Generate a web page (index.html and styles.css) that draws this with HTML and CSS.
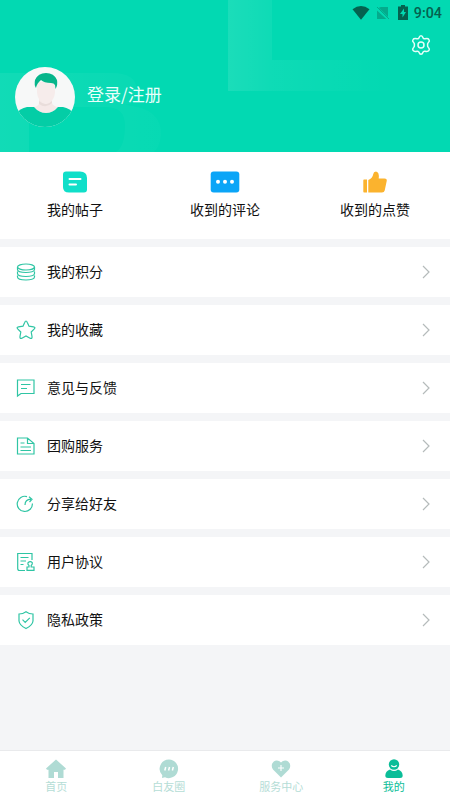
FILE: index.html
```html
<!DOCTYPE html>
<html lang="zh-CN">
<head>
<meta charset="utf-8">
<title>我的</title>
<link rel="stylesheet" href="styles.css">
</head>
<body>
<div class="app">
  <header class="header">
    <svg class="header-art" viewBox="0 0 450 152" aria-hidden="true">
      <defs>
        <linearGradient id="fadeB" x1="0" y1="0" x2="1" y2="0"><stop offset="0" stop-color="#fff" stop-opacity=".06"/><stop offset="1" stop-color="#fff" stop-opacity=".02"/></linearGradient>
        <linearGradient id="fadeL" x1="0" y1="0" x2="1" y2="0"><stop offset="0" stop-color="#fff" stop-opacity=".1"/><stop offset=".2" stop-color="#fff" stop-opacity=".05"/><stop offset=".75" stop-color="#fff" stop-opacity="0"/></linearGradient>
      </defs>
      <path fill="url(#fadeB)" d="M0 73H112Q137 73 137 91Q137 103 125 105Q162 108 161 135Q160 146 154 152H116Q125 147 125 125Q125 107 106 107H29V152H0Z"/>
      <path fill="url(#fadeL)" d="M228 0H272V60H450V91H228Z"/>
    </svg>
    <div class="status">
      <svg class="wifi" viewBox="0 0 18 14"><path d="M.5 3.2Q9-3.2 17.5 3.2L9 13.7Z"/></svg>
      <svg class="sim" viewBox="0 0 12 14"><path d="M4 1H11V11L1.700 1.700ZM0 4.500 9.300 13H0Z"/><path class="slash" d="M0 1 12 13"/></svg>
      <svg class="battery" viewBox="0 0 10 15"><path fill-rule="evenodd" d="M3 0H7V1.500H10V15H0V1.500H3ZM6 3.500 2 9H4.500V12.500L8 7H6Z"/></svg>
      <span class="time">9:04</span>
    </div>
    <svg class="settings" viewBox="0 0 20 20"><path d="M10 .8Q11.400.8 12 2.800Q12.400 4.100 14 3.800Q17 3 18 4.600Q19 6 17.400 7.500Q16.300 8.600 16.600 10Q16.300 11.400 17.400 12.500Q19 14 18 15.400Q17 17 14 16.200Q12.400 15.900 12 17.200Q11.400 19.200 10 19.200Q8.600 19.200 8 17.200Q7.600 15.900 6 16.200Q3 17 2 15.400Q1 14 2.600 12.500Q3.700 11.400 3.400 10Q3.700 8.600 2.600 7.500Q1 6 2 4.600Q3 3 6 3.800Q7.600 4.100 8 2.800Q8.600.8 10 .8Z"/><circle cx="10" cy="10" r="3"/></svg>
    <div class="profile">
      <svg class="avatar" viewBox="0 0 60 60">
        <defs><clipPath id="face"><circle cx="30" cy="30" r="30"/></clipPath></defs>
        <g clip-path="url(#face)">
          <rect width="60" height="60" fill="#f7f8f8"/>
          <path fill="#04cda6" d="M0 48Q5 41 12 40H48Q55 41 60 48V60H0Z"/>
          <path fill="#f5e9e8" d="M24 31H37V36Q38 39 43 40Q38 46 31 46Q24 46 19 40Q24 39 24 36Z"/>
          <path fill="#e9dddb" d="M24 34Q31 40 37 34V36Q31 42 24 37Z"/>
          <path fill="#f6eceb" d="M22 15H40V26Q39 35 31 37Q23 35 22 26Z"/>
          <path fill="#06b58b" d="M21 21Q19 18 20 13Q23 6 31 6Q39 6 42 13Q43 18 40.500 22L40 18Q39 16 36 16Q29 16 26 13Q22 16 21 21Z"/>
        </g>
      </svg>
      <span class="login">登录/注册</span>
    </div>
  </header>

  <section class="stats">
    <a class="stat">
      <svg viewBox="0 0 30 22"><path fill="#10dfc9" d="M6 .5H20Q27 .5 27 7V18.500Q27 21.500 24 21.500H9Q3 21.500 3 16V3.500Q3 .5 6 .5Z"/><path stroke="#fff" stroke-width="2" stroke-linecap="round" d="M9.500 8H20.500M9.500 13.500H16"/></svg>
      <span>我的帖子</span>
    </a>
    <a class="stat">
      <svg viewBox="0 0 30 22"><rect x=".7" y=".5" width="28.600" height="21" rx="3" fill="#0ba5f7"/><g fill="#fff"><circle cx="8" cy="10.700" r="2"/><circle cx="15" cy="10.700" r="2"/><circle cx="22" cy="10.700" r="2"/></g></svg>
      <span>收到的评论</span>
    </a>
    <a class="stat">
      <svg viewBox="0 0 30 22"><path fill="#fbb32e" d="M4 8.500H7V21.500H4Q3.300 21.500 3.300 20.500V9.500Q3.300 8.500 4 8.500ZM8.300 9Q12.500 7.500 13.300 3Q13.500.5 16 .5Q19.500 1 18.700 7.500H24.500Q27.300 7.500 26.700 10L24.700 19.500Q24.200 21.500 22 21.500H8.300Z"/></svg>
      <span>收到的点赞</span>
    </a>
  </section>

  <nav class="menu">
    <a class="row"><svg class="icon" viewBox="0 0 20 20"><ellipse cx="10" cy="5" rx="8.500" ry="3"/><path d="M1.500 5V7.500C1.500 11.500 18.500 11.500 18.500 7.500V5M1.500 9.500V11.500C1.500 15.500 18.500 15.500 18.500 11.500V9.500M1.500 13.500V15C1.500 19 18.500 19 18.500 15V13.500"/></svg><span class="label">我的积分</span><svg class="chevron" viewBox="0 0 8 14"><path d="M1 1 7 7 1 13"/></svg></a>
    <a class="row"><svg class="icon" viewBox="0 0 20 20"><path d="M10 1Q10.700 1 11.200 2.200L13 6.200 17.500 6.800Q19.800 7.200 18.300 8.900L15.200 12 16 16.400Q16.400 19.200 14.100 18.200L10 16 5.900 18.200Q3.600 19.200 4 16.400L4.800 12 1.700 8.900Q.2 7.200 2.500 6.800L7 6.200 8.800 2.200Q9.300 1 10 1Z"/></svg><span class="label">我的收藏</span><svg class="chevron" viewBox="0 0 8 14"><path d="M1 1 7 7 1 13"/></svg></a>
    <a class="row"><svg class="icon" viewBox="0 0 20 20"><path d="M1.500 2H18V15.500H5L1.500 18ZM5 6.500H14.500M5 10.500H11"/></svg><span class="label">意见与反馈</span><svg class="chevron" viewBox="0 0 8 14"><path d="M1 1 7 7 1 13"/></svg></a>
    <a class="row"><svg class="icon" viewBox="0 0 20 20"><path d="M1.500 2H11.500L18 7.500V18H1.500ZM11.500 2V7.500H18M4.500 7H8.500M4.500 11H15M4.500 14.500H15"/></svg><span class="label">团购服务</span><svg class="chevron" viewBox="0 0 8 14"><path d="M1 1 7 7 1 13"/></svg></a>
    <a class="row"><svg class="icon" viewBox="0 0 20 20"><path d="M11 2.600A7.600 7.600 0 1 0 16.400 9.500M9 11Q9 5.500 15 5.200M13 2.700 16 5.200 13.500 8"/></svg><span class="label">分享给好友</span><svg class="chevron" viewBox="0 0 8 14"><path d="M1 1 7 7 1 13"/></svg></a>
    <a class="row"><svg class="icon" viewBox="0 0 20 20"><path d="M9 18.500H3.500Q1.700 18.500 1.700 16.500V1.500H16V8M4.500 5.500H12.500M4.500 9H10M4.500 12.500H7.500M13 13.500Q11.300 12 12 10.700Q14.300 8.500 16.300 10.700Q16.700 12 15.200 13.500V15H18V18.300H11V15H13Z"/></svg><span class="label">用户协议</span><svg class="chevron" viewBox="0 0 8 14"><path d="M1 1 7 7 1 13"/></svg></a>
    <a class="row"><svg class="icon" viewBox="0 0 20 20"><path d="M10 1.700Q13 4 17 4V11Q16.500 15.500 10 18.500Q3.500 15.500 3 11V4Q7 4 10 1.700ZM6.500 9.700 9.200 12.400 13.800 7.800"/></svg><span class="label">隐私政策</span><svg class="chevron" viewBox="0 0 8 14"><path d="M1 1 7 7 1 13"/></svg></a>
  </nav>

  <nav class="tabs">
    <a class="tab"><svg viewBox="0 0 20 20"><path d="M10 .5 20 9.500 19 10.700H17.500V19H12V13H8V19H2.500V10.700H1L0 9.500Z"/></svg><span>首页</span></a>
    <a class="tab"><svg viewBox="0 0 20 20"><path d="M10 .5A9.300 9.300 0 1 1 6 18.300L3 19 3.300 16.300A9.300 9.300 0 0 1 10 .5Z"/><path class="cut" d="M6.700 8 5.800 11.500M10.500 8 9.600 11.500M14.300 8 13.400 11.500"/></svg><span>白友圈</span></a>
    <a class="tab"><svg viewBox="0 0 20 20"><path d="M10 18.500 2 10.500C-1.500 6 3-1 8.500 2.300L10 3.500 11.500 2.300C17-1 21.500 6 18 10.500Z"/><path class="cut thin" d="M10 6V12M7 9H13"/></svg><span>服务中心</span></a>
    <a class="tab active"><svg viewBox="0 0 20 20"><circle cx="10" cy="5.500" r="5.200"/><path d="M6 10.500Q10 13.500 14 10.500Q18.500 12 18.700 16.500Q18.700 19 16 19H4Q1.300 19 1.300 16.500Q1.500 12 6 10.500Z"/><path class="cut thin" d="M7.200 6.500Q10 9 12.800 6.500"/></svg><span>我的</span></a>
  </nav>
</div>
</body>
</html>
```

FILE: styles.css
```css
* { box-sizing: border-box; }

body {
  margin: 0;
  font-family: "Noto Sans CJK SC", sans-serif;
  color: #111;
}

svg { display: block; flex: none; }

.app {
  display: flex;
  flex-direction: column;
  height: 800px;
  background: #f4f5f7;
  overflow: hidden;
}

.header {
  position: relative;
  flex: none;
  display: flex;
  flex-direction: column;
  height: 152px;
  background: #02d9b2;
}

.header-art {
  position: absolute;
  inset: 0;
  width: 450px;
  height: 152px;
}

.status {
  position: relative;
  display: flex;
  align-items: center;
  justify-content: flex-end;
  height: 25px;
  padding-right: 8px;
  fill: #04624f;
}

.wifi { width: 18px; height: 14px; margin-right: 7px; }
.sim { width: 12px; height: 14px; margin-right: 9px; fill: #04ab8c; }
.slash { stroke: #04ab8c; }
.battery { width: 10px; height: 15px; margin-right: 6px; }

.time {
  padding-top: 1px;
  font: 500 14.3px/25px Roboto, sans-serif;
  color: #05614f;
}

.settings {
  position: relative;
  align-self: flex-end;
  width: 20px;
  height: 20px;
  margin: 10px 19px 0 0;
  fill: none;
  stroke: #e5fff9;
  stroke-width: 1.5;
}

.profile {
  position: relative;
  display: flex;
  align-items: center;
  gap: 12px;
  margin: 12px 0 0 15px;
}

.avatar { width: 60px; height: 60px; }

.login {
  font-size: 17px;
  line-height: 24px;
  color: #e9fffb;
  margin-top: -6px;
}

.stats {
  flex: none;
  display: grid;
  grid-template-columns: repeat(3, 1fr);
  height: 87px;
  padding-top: 19px;
  background: #fff;
}

.stat {
  display: flex;
  flex-direction: column;
  align-items: center;
  gap: 5px;
  font-size: 14px;
  line-height: 22px;
}

.stat svg { width: 30px; height: 22px; }

.menu {
  display: flex;
  flex-direction: column;
  gap: 8px;
  margin-top: 8px;
}

.row {
  display: flex;
  align-items: center;
  height: 50px;
  padding: 0 20px 0 16px;
  background: #fff;
}

.icon {
  width: 20px;
  height: 20px;
  margin-right: 11px;
  fill: none;
  stroke: #2fc5a4;
  stroke-width: 1.2;
}

.label {
  flex: 1;
  padding-bottom: 2px;
  font-size: 14px;
  line-height: 22px;
}

.chevron {
  width: 8px;
  height: 14px;
  fill: none;
  stroke: #b5bbbb;
  stroke-width: 1.2;
}

.tabs {
  display: grid;
  grid-template-columns: repeat(4, 1fr);
  height: 50px;
  margin-top: auto;
  padding-top: 8px;
  border-top: 1px solid #e9eaec;
  background: #fff;
}

.tab {
  display: flex;
  flex-direction: column;
  align-items: center;
  font-size: 11px;
  line-height: 14px;
  color: #b5ddd6;
  fill: #afdbd4;
}

.tab svg { width: 20px; height: 20px; }

.active { color: #0bbd98; fill: #0bbd98; }

.cut { fill: none; stroke: #fff; stroke-width: 1.5; }
.thin { stroke-width: 1.1; }
```
